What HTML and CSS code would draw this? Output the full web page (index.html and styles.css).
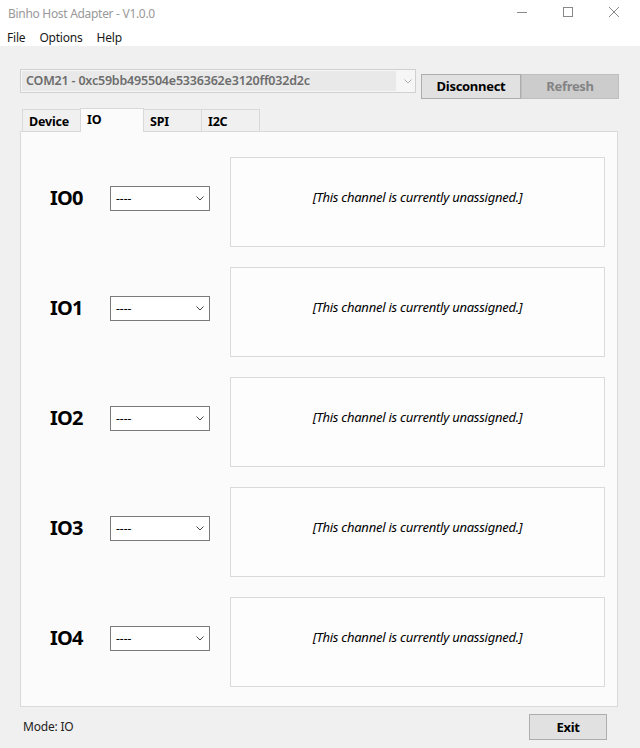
FILE: index.html
```html
<!DOCTYPE html>
<html>
<head>
<meta charset="utf-8">
<link rel="stylesheet" href="styles.css">
</head>
<body>
<div class="window">
  <div class="titlebar">
    <span class="title">Binho Host Adapter - V1.0.0</span>
    <div class="controls">
      <svg class="ctl" width="46" height="26" viewBox="0 0 46 26"><path d="M18 12.5h10" stroke="#888" stroke-width="1"/></svg>
      <svg class="ctl" width="46" height="26" viewBox="0 0 46 26"><rect x="18.5" y="7.5" width="9" height="9" fill="none" stroke="#888" stroke-width="1"/></svg>
      <svg class="ctl" width="46" height="26" viewBox="0 0 46 26"><path d="M18 7l10 10M28 7l-10 10" stroke="#888" stroke-width="1"/></svg>
    </div>
  </div>
  <div class="menubar">
    <span class="menuitem">File</span>
    <span class="menuitem">Options</span>
    <span class="menuitem">Help</span>
  </div>
  <div class="client">
    <div class="toprow">
      <div class="portcombo">
        <div class="portfield">COM21 - 0xc59bb495504e5336362e3120ff032d2c</div>
        <svg class="portarrow" width="8" height="5" viewBox="0 0 8 5"><path d="M0.5 0.5l3.5 3.5 3.5-3.5" fill="none" stroke="#b0b0b0" stroke-width="1"/></svg>
      </div>
      <button class="btn btn-disconnect">Disconnect</button>
      <button class="btn btn-refresh">Refresh</button>
    </div>
    <div class="tabs">
      <div class="tab">Device</div>
      <div class="tab tab-active">IO</div>
      <div class="tab">SPI</div>
      <div class="tab">I2C</div>
    </div>
    <div class="panel">
      <div class="iorow">
        <div class="iolabel">IO0</div>
        <div class="select"><span>----</span><svg width="8" height="5" viewBox="0 0 8 5"><path d="M0.5 0.5l3.5 3.5 3.5-3.5" fill="none" stroke="#444" stroke-width="1"/></svg></div>
        <div class="iobox">[This channel is currently unassigned.]</div>
      </div>
      <div class="iorow">
        <div class="iolabel">IO1</div>
        <div class="select"><span>----</span><svg width="8" height="5" viewBox="0 0 8 5"><path d="M0.5 0.5l3.5 3.5 3.5-3.5" fill="none" stroke="#444" stroke-width="1"/></svg></div>
        <div class="iobox">[This channel is currently unassigned.]</div>
      </div>
      <div class="iorow">
        <div class="iolabel">IO2</div>
        <div class="select"><span>----</span><svg width="8" height="5" viewBox="0 0 8 5"><path d="M0.5 0.5l3.5 3.5 3.5-3.5" fill="none" stroke="#444" stroke-width="1"/></svg></div>
        <div class="iobox">[This channel is currently unassigned.]</div>
      </div>
      <div class="iorow">
        <div class="iolabel">IO3</div>
        <div class="select"><span>----</span><svg width="8" height="5" viewBox="0 0 8 5"><path d="M0.5 0.5l3.5 3.5 3.5-3.5" fill="none" stroke="#444" stroke-width="1"/></svg></div>
        <div class="iobox">[This channel is currently unassigned.]</div>
      </div>
      <div class="iorow">
        <div class="iolabel">IO4</div>
        <div class="select"><span>----</span><svg width="8" height="5" viewBox="0 0 8 5"><path d="M0.5 0.5l3.5 3.5 3.5-3.5" fill="none" stroke="#444" stroke-width="1"/></svg></div>
        <div class="iobox">[This channel is currently unassigned.]</div>
      </div>
    </div>
    <div class="statusrow">
      <span class="mode">Mode: IO</span>
      <button class="btn btn-exit">Exit</button>
    </div>
  </div>
</div>
</body>
</html>
```
FILE: styles.css
```css
* { box-sizing: border-box; }
html, body { margin: 0; padding: 0; }
body {
  width: 640px;
  height: 748px;
  overflow: hidden;
  font-family: "Noto Sans", "Open Sans", sans-serif;
  font-size: 12px;
  color: #000;
  background: #f0f0f0;
}
.window { width: 640px; height: 748px; display: flex; flex-direction: column; }
.titlebar {
  height: 26px;
  background: #fff;
  display: flex;
  align-items: center;
  justify-content: space-between;
}
.title { padding-left: 8px; color: #999; font-size: 12px; letter-spacing: -0.3px; }
.controls { display: flex; align-self: flex-start; margin-right: 3px; }
.ctl { display: block; }
.menubar {
  height: 20px;
  background: #fff;
  display: flex;
  align-items: center;
  padding-top: 2px;
}
.menuitem { padding: 0 7px; color: #1a1a1a; letter-spacing: -0.2px; }
.client { flex: 1; display: flex; flex-direction: column; padding: 23px 21px 0 20px; }
.toprow { display: flex; align-items: flex-start; height: 39px; }
.portcombo {
  width: 396px;
  height: 24px;
  border: 1px solid #d0d0d0;
  background: #f6f6f6;
  display: flex;
  align-items: center;
  padding: 1px;
}
.portfield {
  width: 374px;
  height: 20px;
  background: #e9e9e9;
  color: #6d6d6d;
  font-weight: 600;
  font-size: 12.5px;
  line-height: 20px;
  padding-left: 4px;
  letter-spacing: -0.2px;
  white-space: nowrap;
  overflow: hidden;
}
.portarrow { margin-left: 8px; }
.btn {
  font-family: inherit;
  font-weight: 700;
  font-size: 13px;
  height: 25px;
  margin: 0;
  padding: 0 0 1px 0;
  border: 1px solid #adadad;
  background: #e1e1e1;
  color: #000;
  letter-spacing: -0.3px;
}
.btn-disconnect { margin-top: 5px; margin-left: 5px; width: 100px; }
.btn-refresh { margin-top: 5px; width: 98px; background: #cccccc; border-color: #bfbfbf; color: #848484; }
.tabs { display: flex; align-items: flex-end; height: 23px; padding-left: 2px; position: relative; z-index: 1; }
.tab {
  height: 22px;
  border: 1px solid #d9d9d9;
  border-bottom: none;
  background: #f0f0f0;
  font-weight: 700;
  font-size: 12.5px;
  padding: 3px 0 0 6px;
  width: 59px;
  margin-left: -1px;
  letter-spacing: -0.2px;
}
.tab:first-child { margin-left: 0; }
.tab-active {
  height: 24px;
  width: 64px;
  background: #fbfbfb;
  padding-top: 2px;
  margin-bottom: -1px;
  position: relative;
  z-index: 2;
}
.panel {
  width: 598px;
  height: 576px;
  border: 1px solid #d9d9d9;
  background: #fbfbfb;
  padding: 25px 0 0 29px;
  display: flex;
  flex-direction: column;
  gap: 20px;
}
.iorow { display: flex; align-items: flex-start; height: 90px; }
.iolabel {
  width: 60px;
  margin-top: 29px;
  font-weight: 700;
  font-size: 20px;
  line-height: 24px;
  letter-spacing: -0.8px;
}
.select {
  margin-top: 29px;
  width: 100px;
  height: 25px;
  border: 1px solid #7a7a7a;
  background: #fff;
  display: flex;
  align-items: center;
  justify-content: space-between;
  padding: 0 5px 0 5px;
  font-size: 12px;
}
.iobox {
  margin-left: 20px;
  width: 375px;
  height: 90px;
  border: 1px solid #dadada;
  background: #fdfdfd;
  display: flex;
  align-items: center;
  justify-content: center;
  font-style: italic;
  font-size: 13px;
  letter-spacing: -0.25px;
  padding-bottom: 10px;
}
.statusrow { display: flex; align-items: flex-start; justify-content: space-between; padding-top: 7px; padding-right: 12px; }
.mode { margin-left: 3px; margin-top: 4px; color: #222; font-size: 12px; letter-spacing: -0.2px; }
.btn-exit { width: 78px; height: 26px; }
```
